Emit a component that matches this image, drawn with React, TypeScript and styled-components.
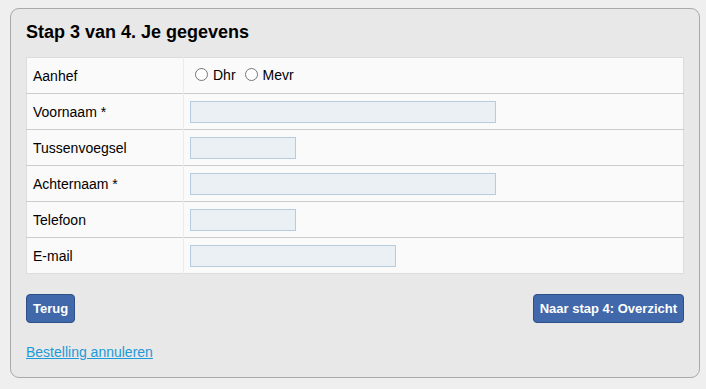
import * as React from 'react';
import styled, { createGlobalStyle } from 'styled-components';

const GlobalStyle = createGlobalStyle`
  html, body {
    margin: 0;
    padding: 0;
    background: #efefef;
  }
  body {
    font-family: "Liberation Sans", Arial, sans-serif;
    font-size: 14px;
    color: #000;
  }
`;

/** Page wrapper */
const Page = styled.div`
  padding: 8px 6px 12px 10px;
`;

/** Step panel */
const Panel = styled.div`
  background: #e8e8e8;
  border: 1px solid #a9a9a9;
  border-radius: 9px;
  padding: 12px 15px 17px 15px;
`;

const Title = styled.h2`
  margin: 0 0 14px 0;
  font-size: 18px;
  font-weight: bold;
  line-height: 22px;
`;

const Table = styled.table`
  width: 100%;
  border-collapse: collapse;
  background: #fafafa;
  border: 1px solid #dcdcdc;
`;

const Row = styled.tr`
  border-bottom: 1px solid #cccccc;

  &:last-child {
    border-bottom: none;
  }
`;

const Label = styled.td`
  width: 144px;
  height: 35px;
  padding: 0 6px;
  border-right: 1px solid #ebebeb;
  vertical-align: middle;
`;

const Field = styled.td`
  height: 35px;
  padding: 0 6px;
  vertical-align: middle;
`;

const TextInput = styled.input<{ $w: number }>`
  box-sizing: border-box;
  display: block;
  width: ${(p) => p.$w}px;
  height: 22px;
  margin: 1px 0 0 0;
  background: #ebf0f5;
  border: 1px solid #b7cbde;
  font-family: inherit;
  font-size: 14px;
  outline: none;
`;

const RadioLabel = styled.label`
  display: inline-flex;
  align-items: center;
  margin-right: 4px;
  font-size: 14px;

  input {
    margin: 0 5px 0 5px;
    width: 13px;
    height: 13px;
  }
`;

const Actions = styled.div`
  display: flex;
  justify-content: space-between;
  margin-top: 20px;
`;

const Button = styled.button`
  background: #4068aa;
  border: 1px solid #2c4f88;
  border-radius: 4px;
  color: #fff;
  font-family: inherit;
  font-size: 13px;
  font-weight: bold;
  line-height: 17px;
  padding: 5px 6px;
  cursor: pointer;
`;

const CancelLink = styled.a`
  display: inline-block;
  margin-top: 21px;
  color: #1d9ad8;
  text-decoration: underline;
  font-size: 14px;
`;

const fields = [
  { label: 'Voornaam *', width: 306 },
  { label: 'Tussenvoegsel', width: 106 },
  { label: 'Achternaam *', width: 306 },
  { label: 'Telefoon', width: 106 },
  { label: 'E-mail', width: 206 },
];

const App: React.FC = () => (
  <Page>
    <GlobalStyle />
    <Panel>
      <Title>Stap 3 van 4. Je gegevens</Title>
      <Table>
        <tbody>
          <Row>
            <Label>Aanhef</Label>
            <Field>
              <RadioLabel>
                <input type="radio" name="aanhef" />
                Dhr
              </RadioLabel>
              <RadioLabel>
                <input type="radio" name="aanhef" />
                Mevr
              </RadioLabel>
            </Field>
          </Row>
          {fields.map((f) => (
            <Row key={f.label}>
              <Label>{f.label}</Label>
              <Field>
                <TextInput type="text" $w={f.width} />
              </Field>
            </Row>
          ))}
        </tbody>
      </Table>
      <Actions>
        <Button>Terug</Button>
        <Button>Naar stap 4: Overzicht</Button>
      </Actions>
      <CancelLink href="#annuleren">Bestelling annuleren</CancelLink>
    </Panel>
  </Page>
);

export default App;
